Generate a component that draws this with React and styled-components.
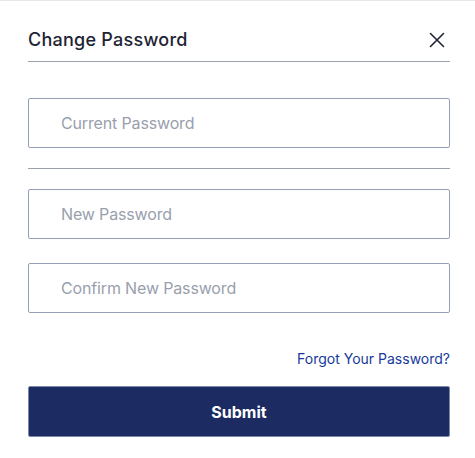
import React from 'react';
import styled, { createGlobalStyle } from 'styled-components';

const GlobalStyle = createGlobalStyle`
	html, body {
		margin: 0;
		padding: 0;
		background: #ffffff;
	}
	body {
		font-family: Inter, "Noto Sans", "Liberation Sans", sans-serif;
		-webkit-font-smoothing: antialiased;
	}
`;

const Modal = styled.div`
	border-top: 1px solid #e6e8ec;
	padding: 0 25px 0 28px;
`;

const Header = styled.div`
	display: flex;
	align-items: center;
	justify-content: space-between;
	padding: 27px 0 9px;
	border-bottom: 1px solid #9aa1ad;
`;

const Title = styled.h2`
	margin: 0;
	font-size: 18px;
	line-height: 24px;
	font-weight: 500;
	color: #1d2433;
	letter-spacing: 0.25px;
`;

const CloseButton = styled.button`
	display: flex;
	align-items: center;
	justify-content: center;
	width: 24px;
	height: 24px;
	padding: 0;
	margin-right: 1px;
	border: none;
	background: none;
	color: #1d2433;
	cursor: pointer;
`;

const Form = styled.form`
	display: flex;
	flex-direction: column;
	padding-top: 36px;
`;

const Input = styled.input`
	box-sizing: border-box;
	width: 100%;
	height: 50px;
	margin-top: ${p => p.$gap || 0}px;
	padding: 0 16px 0 32px;
	border: 1px solid #95a0b8;
	border-radius: 2px;
	font-family: inherit;
	font-size: 16px;
	letter-spacing: -0.15px;
	color: #1d2433;
	outline: none;

	&::placeholder {
		color: #99a0ad;
	}
`;

const Divider = styled.hr`
	margin: 20px 0 20px;
	border: none;
	border-top: 1px solid #9aa1ad;
`;

const LinkRow = styled.div`
	display: flex;
	justify-content: flex-end;
	margin-top: 36px;
`;

const ForgotLink = styled.a`
	font-size: 14px;
	line-height: 20px;
	color: #163a9a;
	text-decoration: none;
	cursor: pointer;
`;

const SubmitButton = styled.button`
	box-sizing: border-box;
	height: 51px;
	margin-top: 17px;
	border: 1px solid #7a88ad;
	border-radius: 2px;
	background: #1d2b63;
	color: #ffffff;
	font-family: inherit;
	font-size: 16px;
	font-weight: 700;
	cursor: pointer;
`;

export default function App() {
	return (
		<>
			<GlobalStyle />
			<Modal>
				<Header>
					<Title>Change Password</Title>
					<CloseButton aria-label="Close">
						<svg width="16" height="16" viewBox="0 0 16 16" fill="none">
							<path d="M1.5 1.5l13 13M14.5 1.5l-13 13" stroke="currentColor" strokeWidth="1.6" strokeLinecap="round" />
						</svg>
					</CloseButton>
				</Header>
				<Form onSubmit={e => e.preventDefault()}>
					<Input type="password" placeholder="Current Password" />
					<Divider />
					<Input type="password" placeholder="New Password" />
					<Input type="password" placeholder="Confirm New Password" $gap={24} />
					<LinkRow>
						<ForgotLink>Forgot Your Password?</ForgotLink>
					</LinkRow>
					<SubmitButton type="submit">Submit</SubmitButton>
				</Form>
			</Modal>
		</>
	);
}
